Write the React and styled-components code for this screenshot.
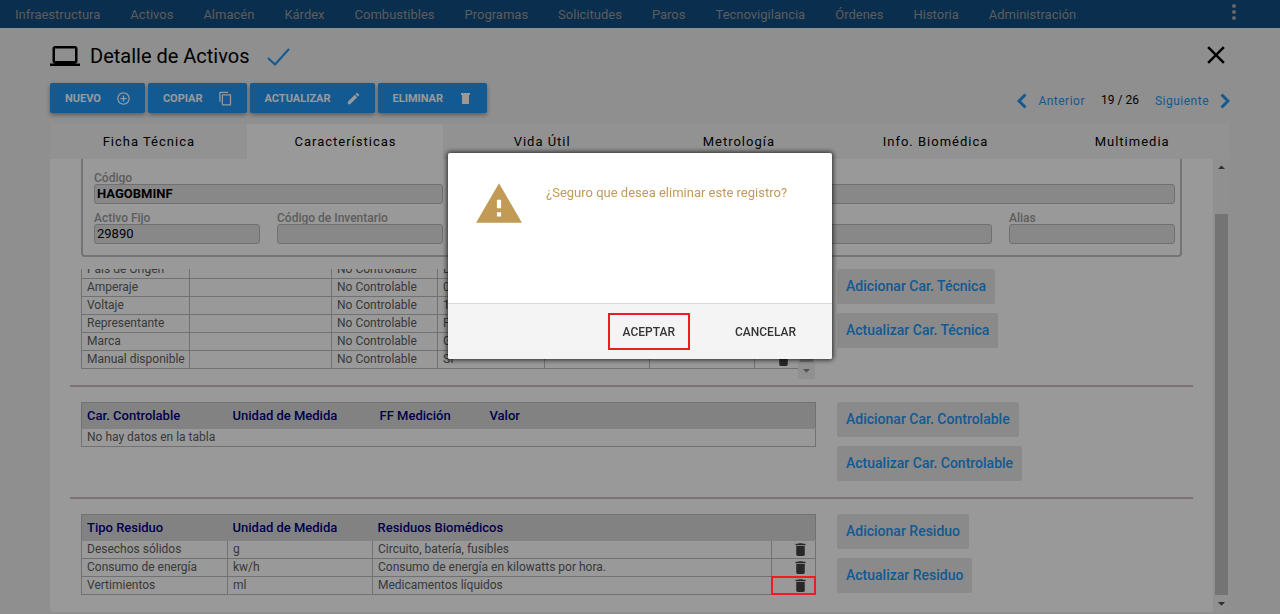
import React from "react";
import styled, { createGlobalStyle } from "styled-components";
import {
  MdLaptop,
  MdClose,
  MdMoreVert,
  MdAddCircleOutline,
  MdContentCopy,
  MdEdit,
  MdDelete,
  MdWarning,
  MdArrowDropUp,
  MdArrowDropDown,
} from "react-icons/md";

const GlobalStyle = createGlobalStyle`
  *, *::before, *::after { box-sizing: border-box; }
  body {
    margin: 0;
    background: #eeeeee;
    font-family: Roboto, "Liberation Sans", sans-serif;
    font-size: 12px;
    color: #000;
  }
  button, input { font-family: inherit; margin: 0; }
  svg { display: block; flex: none; }
`;

const NavBar = styled.nav`
  display: flex;
  align-items: center;
  height: 28px;
  padding: 0 34px 0 15px;
  gap: 30px;
  background: #124d80;
`;

const NavLink = styled.a`
  color: #9a9a9a;
  font-size: 13px;
  line-height: 16px;
  padding-top: 1px;
  text-decoration: none;
  white-space: nowrap;
`;

const IconButton = styled.button`
  display: flex;
  margin-left: auto;
  padding: 0;
  border: 0;
  background: none;
  color: ${(p) => p.$color || "#000"};
  cursor: pointer;
`;

const MenuButton = styled(IconButton)`
  align-self: flex-start;
`;

const Page = styled.main`
  margin: 0 50px;
`;

const TitleBar = styled.header`
  display: flex;
  align-items: center;
  height: 55px;
`;

const CloseButton = styled(IconButton)`
  margin-right: -1px;
  padding-bottom: 2px;
`;

const Title = styled.h1`
  margin: 0 18px 0 10px;
  font-size: 20px;
  font-weight: 400;
  line-height: 24px;
`;

const Toolbar = styled.div`
  display: flex;
  gap: 3px;
  height: 41px;
  align-items: flex-start;
`;

const ActionButton = styled.button`
  display: flex;
  align-items: center;
  gap: 15px;
  height: 30px;
  padding: 0 14px 0 15px;
  border: 0;
  border-radius: 2px;
  background: #2196f3;
  color: #fff;
  font-size: 11px;
  font-weight: 700;
  text-transform: uppercase;
  box-shadow: 0 2px 4px rgba(0, 0, 0, 0.35);
  cursor: pointer;
`;

const Pager = styled.div`
  display: flex;
  align-items: center;
  gap: 16px;
  height: 36px;
  margin-left: auto;
`;

const PageCount = styled.span`
  padding-bottom: 2px;
`;

const PagerLink = styled.a`
  display: flex;
  align-items: center;
  gap: 11px;
  color: #2196f3;
  letter-spacing: 0.5px;
  text-decoration: none;
`;

const Tabs = styled.div`
  display: grid;
  grid-template-columns: repeat(6, 1fr);
  height: 35px;
`;

const Tab = styled.button`
  border: 0;
  padding: 0 0 0 1px;
  background: ${(p) => (p.$active ? "#ffffff" : "#f3f3f3")};
  font-size: 13px;
  letter-spacing: 1px;
  color: #000;
  cursor: pointer;
`;

const Panel = styled.section`
  display: flex;
  margin-bottom: 2px;
  background: #fff;
  border-radius: 0 0 3px 3px;
  overflow: hidden;
`;

const PanelBody = styled.div`
  flex: 1;
  min-width: 0;
  padding: 0 20px;
`;

const ScrollTrack = styled.div`
  display: flex;
  flex-direction: column;
  align-items: center;
  justify-content: space-between;
  width: 17px;
  flex: none;
  background: #f1f1f1;
  color: ${(p) => p.$arrow || "#505050"};
`;

const ScrollThumb = styled.div`
  flex: 1;
  width: 13px;
  margin-top: ${(p) => p.$gap || "0"};
  background: #c1c1c1;
`;

const FieldGroup = styled.div`
  display: grid;
  grid-template-columns: repeat(6, 1fr);
  column-gap: 17px;
  row-gap: 6px;
  margin: 0 11px 12px;
  padding: 11px 5px 11px 11px;
  border: 2px solid #c0c0c0;
  border-top: 0;
  border-radius: 0 0 4px 4px;
`;

const Field = styled.label`
  display: flex;
  flex-direction: column;
  justify-content: flex-end;
  grid-column: span ${(p) => p.$span || 1};
  height: 34px;
  font-weight: 500;
  line-height: 12px;
  color: #9b9b9b;
`;

const FieldInput = styled.input`
  width: 100%;
  height: 20px;
  padding: 0 2px 2px;
  border: 1px solid #bbbbbb;
  border-radius: 3px;
  background: #e3e3e3;
  font-size: 13px;
  font-weight: ${(p) => (p.$bold ? 700 : 400)};
  color: #000;
`;

const Section = styled.div`
  display: flex;
  gap: 22px;
  min-height: ${(p) => p.$min};
  padding-left: 11px;
`;

const Divider = styled.hr`
  height: 2px;
  margin: 0 0 15px;
  border: 0;
  background: #c9bfbf;
`;

const TableArea = styled.div`
  flex: 0 1 734px;
  min-width: 0;
`;

const ScrollArea = styled(TableArea)`
  display: flex;
  height: 110px;
  overflow: hidden;
`;

const ScrollContent = styled.div`
  display: flex;
  flex-direction: column;
  justify-content: flex-end;
  flex: 1;
  min-width: 0;
  padding-bottom: 10px;
`;

const Table = styled.table`
  width: 100%;
  table-layout: fixed;
  border-collapse: collapse;
  border: 1px solid #bdbdbd;
`;

const HeadCell = styled.th`
  height: 26px;
  padding: 0 5px;
  border-bottom: 1px solid #d9d9d9;
  background: #d9d9d9;
  color: #000080;
  font-size: 13px;
  font-weight: 500;
  line-height: 16px;
  text-align: left;
  white-space: nowrap;
`;

const Cell = styled.td`
  position: relative;
  height: 18px;
  padding: 0 5px 1px;
  border: 1px solid #bdbdbd;
  color: #606060;
  line-height: 16px;
  white-space: nowrap;
  thead + tbody > tr:first-child > & {
    border-top: 0;
  }
  ${(p) =>
    p.$marked &&
    `&::after {
      content: "";
      position: absolute;
      inset: -1px;
      border: 2px solid #ed1c24;
      z-index: 20;
    }`}
`;

const DeleteCell = styled(Cell)`
  padding-bottom: 0;
`;

const DeleteButton = styled(IconButton)`
  margin-right: 1px;
`;

const ButtonColumn = styled.div`
  display: flex;
  flex-direction: column;
  align-items: flex-start;
  gap: 9px;
`;

const SideButton = styled.button`
  height: 35px;
  padding: 0 9px 2px;
  border: 0;
  border-radius: 2px;
  background: #e6e6e6;
  color: #2196f3;
  font-size: 14px;
  font-weight: 500;
  white-space: nowrap;
  cursor: pointer;
`;

const Backdrop = styled.div`
  position: fixed;
  inset: 0;
  z-index: 10;
  display: flex;
  justify-content: center;
  align-items: flex-start;
  padding-top: 153px;
  background: rgba(0, 0, 0, 0.4);
`;

const Dialog = styled.div`
  width: 384px;
  max-width: 100%;
  border-radius: 2px;
  overflow: hidden;
  background: #fff;
  box-shadow: 0 0 5px 1px rgba(0, 0, 0, 0.75);
`;

const DialogBody = styled.div`
  display: flex;
  gap: 21px;
  min-height: 150px;
  padding: 26px;
  color: #c19a55;
`;

const DialogText = styled.p`
  margin: 6px 0 0;
  padding-left: 1px;
  font-size: 13px;
  line-height: 16px;
`;

const DialogFooter = styled.footer`
  display: flex;
  justify-content: flex-end;
  align-items: center;
  gap: 30px;
  height: 56px;
  padding-right: 21px;
  border-top: 1px solid #dadada;
  background: #f4f4f4;
`;

const DialogButton = styled.button`
  height: 37px;
  padding: 0 13px;
  border: 2px solid ${(p) => (p.$marked ? "#ed1c24" : "transparent")};
  background: none;
  color: #343434;
  font-size: 12px;
  font-weight: 500;
  text-transform: uppercase;
  cursor: pointer;
`;

const navItems = [
  "Infraestructura", "Activos", "Almacén", "Kárdex", "Combustibles", "Programas",
  "Solicitudes", "Paros", "Tecnovigilancia", "Órdenes", "Historia", "Administración",
];

function BinIcon() {
  return (
    <svg width="15" height="15" viewBox="0 0 15 15" fill="currentColor">
      <path d="M3 2h9v2h-1v9H4V4H3z" />
    </svg>
  );
}

function Chevron({ next }) {
  return (
    <svg width="10" height="16" viewBox="0 0 10 16" fill="none" stroke="currentColor" strokeWidth="3">
      <path d={next ? "M1.500 1.500 L8 8 L1.500 14.500" : "M8.500 1.500 L2 8 L8.500 14.500"} />
    </svg>
  );
}

const actions = [
  ["Nuevo", MdAddCircleOutline],
  ["Copiar", MdContentCopy],
  ["Actualizar", MdEdit],
  ["Eliminar", BinIcon],
];

const tabs = ["Ficha Técnica", "Características", "Vida Útil", "Metrología", "Info. Biomédica", "Multimedia"];

const technical = [
  ["País de Origen", "Estados Unidos"],
  ["Amperaje", "0.5 A"],
  ["Voltaje", "110 V"],
  ["Representante", "F"],
  ["Marca", "G"],
  ["Manual disponible", "SI"],
];

const residues = [
  ["Desechos sólidos", "g", "Circuito, batería, fusibles"],
  ["Consumo de energía", "kw/h", "Consumo de energía en kilowatts por hora."],
  ["Vertimientos", "ml", "Medicamentos líquidos"],
];

function Columns({ widths }) {
  return (
    <colgroup>
      {widths.map((w, i) => (
        <col key={i} width={w} />
      ))}
    </colgroup>
  );
}

function TrashCell({ marked }) {
  return (
    <DeleteCell $marked={marked}>
      <DeleteButton aria-label="Eliminar fila" $color="#444">
        <MdDelete size={17} />
      </DeleteButton>
    </DeleteCell>
  );
}

export default function App() {
  return (
    <>
      <GlobalStyle />
      <NavBar>
        {navItems.map((item) => (
          <NavLink href="#" key={item}>{item}</NavLink>
        ))}
        <MenuButton aria-label="Más opciones" $color="#a8a8a8">
          <MdMoreVert size={24} />
        </MenuButton>
      </NavBar>

      <Page>
        <TitleBar>
          <MdLaptop size={30} />
          <Title>Detalle de Activos</Title>
          <svg width="24" height="20" viewBox="0 0 24 20" fill="none" stroke="#2196f3" strokeWidth="2">
            <path d="M1 12 L8 18.500 L22 3" />
          </svg>
          <CloseButton aria-label="Cerrar">
            <MdClose size={30} />
          </CloseButton>
        </TitleBar>

        <Toolbar>
          {actions.map(([label, Icon]) => (
            <ActionButton key={label}>
              {label}
              <Icon size={15} />
            </ActionButton>
          ))}
          <Pager>
            <PagerLink href="#">
              <Chevron />
              Anterior
            </PagerLink>
            <PageCount>19 / 26</PageCount>
            <PagerLink href="#">
              Siguiente
              <Chevron next />
            </PagerLink>
          </Pager>
        </Toolbar>

        <Tabs role="tablist">
          {tabs.map((tab) => (
            <Tab key={tab} role="tab" aria-selected={tab === "Características"} $active={tab === "Características"}>
              {tab}
            </Tab>
          ))}
        </Tabs>

        <Panel>
          <PanelBody>
            <FieldGroup>
              <Field $span={2}>
                Código
                <FieldInput defaultValue="HAGOBMINF" $bold />
              </Field>
              <Field $span={4}>
                <FieldInput aria-label="Nombre" />
              </Field>
              <Field>
                Activo Fijo
                <FieldInput defaultValue="29890" />
              </Field>
              <Field>
                Código de Inventario
                <FieldInput />
              </Field>
              <Field $span={3}>
                <FieldInput aria-label="Descripción" />
              </Field>
              <Field>
                Alias
                <FieldInput />
              </Field>
            </FieldGroup>

            <Section $min="116px">
              <ScrollArea>
                <ScrollContent>
                  <Table>
                    <Columns widths={[108, 142, 106, 107, 105, 105, 44]} />
                    <tbody>
                      {technical.map(([name, value]) => (
                        <tr key={name}>
                          <Cell>{name}</Cell>
                          <Cell />
                          <Cell>No Controlable</Cell>
                          <Cell>{value}</Cell>
                          <Cell />
                          <Cell />
                          <TrashCell />
                        </tr>
                      ))}
                    </tbody>
                  </Table>
                </ScrollContent>
                <ScrollTrack $arrow="#8a8a8a">
                  <ScrollThumb />
                  <MdArrowDropDown size={17} />
                </ScrollTrack>
              </ScrollArea>
              <ButtonColumn>
                <SideButton>Adicionar Car. Técnica</SideButton>
                <SideButton>Actualizar Car. Técnica</SideButton>
              </ButtonColumn>
            </Section>

            <Divider />
            <Section $min="95px">
              <TableArea>
                <Table>
                  <Columns widths={[146, 147, 110, 331]} />
                  <thead>
                    <tr>
                      <HeadCell>Car. Controlable</HeadCell>
                      <HeadCell>Unidad de Medida</HeadCell>
                      <HeadCell>FF Medición</HeadCell>
                      <HeadCell>Valor</HeadCell>
                    </tr>
                  </thead>
                  <tbody>
                    <tr>
                      <Cell colSpan={4}>No hay datos en la tabla</Cell>
                    </tr>
                  </tbody>
                </Table>
              </TableArea>
              <ButtonColumn>
                <SideButton>Adicionar Car. Controlable</SideButton>
                <SideButton>Actualizar Car. Controlable</SideButton>
              </ButtonColumn>
            </Section>

            <Divider />
            <Section $min="98px">
              <TableArea>
                <Table>
                  <Columns widths={[146, 145, 399, 44]} />
                  <thead>
                    <tr>
                      <HeadCell>Tipo Residuo</HeadCell>
                      <HeadCell>Unidad de Medida</HeadCell>
                      <HeadCell>Residuos Biomédicos</HeadCell>
                      <HeadCell />
                    </tr>
                  </thead>
                  <tbody>
                    {residues.map(([type, unit, text], i) => (
                      <tr key={type}>
                        <Cell>{type}</Cell>
                        <Cell>{unit}</Cell>
                        <Cell>{text}</Cell>
                        <TrashCell marked={i === 2} />
                      </tr>
                    ))}
                  </tbody>
                </Table>
              </TableArea>
              <ButtonColumn>
                <SideButton>Adicionar Residuo</SideButton>
                <SideButton>Actualizar Residuo</SideButton>
              </ButtonColumn>
            </Section>
          </PanelBody>
          <ScrollTrack>
            <MdArrowDropUp size={17} />
            <ScrollThumb $gap="38px" />
            <MdArrowDropDown size={17} />
          </ScrollTrack>
        </Panel>
      </Page>

      <Backdrop>
        <Dialog role="alertdialog" aria-label="Confirmar eliminación">
          <DialogBody>
            <MdWarning size={50} />
            <DialogText>¿Seguro que desea eliminar este registro?</DialogText>
          </DialogBody>
          <DialogFooter>
            <DialogButton $marked>Aceptar</DialogButton>
            <DialogButton>Cancelar</DialogButton>
          </DialogFooter>
        </Dialog>
      </Backdrop>
    </>
  );
}
